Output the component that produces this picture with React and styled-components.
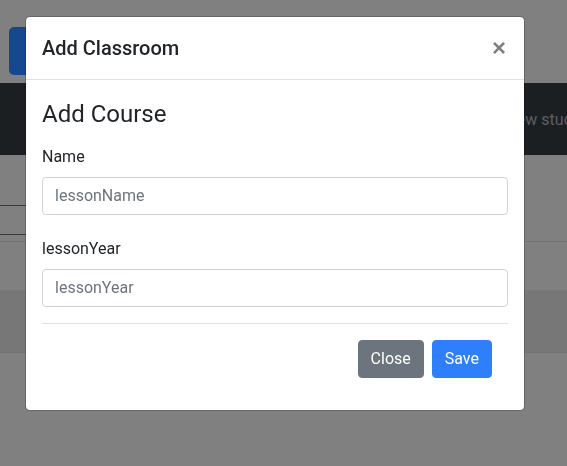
import React from "react";
import styled, { createGlobalStyle } from "styled-components";

const GlobalStyle = createGlobalStyle`
  html, body {
    margin: 0;
    padding: 0;
    height: 100%;
    overflow: hidden;
  }
  body {
    background: #808080;
    font-family: "Segoe UI", Roboto, "Open Sans", sans-serif;
    color: #212529;
  }
  * {
    box-sizing: border-box;
  }
`;

/* ---------- dimmed page behind the modal ---------- */

const Page = styled.div`
  display: flex;
  flex-direction: column;
  height: 466px;
  background: #808080;
`;

const TopBar = styled.div`
  height: 83px;
  padding: 27px 0 8px 9px;
`;

const BrandButton = styled.div`
  width: 120px;
  height: 48px;
  background: #164890;
  border-radius: 5px;
`;

const NavBar = styled.nav`
  height: 72px;
  background: #1c1f22;
  display: flex;
  align-items: center;
  padding-left: 508px;
  overflow: hidden;
`;

const NavLink = styled.span`
  font-size: 16px;
  color: #5a5f64;
  white-space: nowrap;
`;

const SearchRow = styled.div`
  padding-top: 50px;
`;

const SearchBox = styled.div`
  width: 180px;
  height: 30px;
  border-top: 1px solid #3a3a3a;
  border-bottom: 1px solid #3a3a3a;
`;

const TableHead = styled.div`
  height: 7px;
  border-bottom: 1px solid #737373;
`;

const TableRow = styled.div`
  height: ${(p) => p.$h}px;
  background: ${(p) => (p.$shade ? "#777777" : "transparent")};
  border-bottom: 1px solid ${(p) => (p.$shade ? "#727272" : "transparent")};
`;

/* ---------- modal ---------- */

const ModalLayer = styled.div`
  position: fixed;
  inset: 0;
  padding: 16px 0 0 25px;
`;

const Dialog = styled.div`
  width: 500px;
  background: #fff;
  border: 1px solid rgba(0, 0, 0, 0.2);
  border-radius: 5px;
  background-clip: padding-box;
  display: flex;
  flex-direction: column;
`;

const Header = styled.div`
  display: flex;
  align-items: center;
  justify-content: space-between;
  padding: 16px;
  border-bottom: 1px solid #dee2e6;
`;

const Title = styled.h5`
  margin: 0;
  font-size: 20px;
  font-weight: 500;
  line-height: 30px;
`;

const CloseX = styled.button`
  border: 0;
  background: transparent;
  padding: 0 2px 0 0;
  font-size: 24px;
  font-weight: 700;
  line-height: 1;
  color: #000;
  opacity: 0.5;
  text-shadow: 0 1px 0 #fff;
  font-family: "Liberation Sans", "Open Sans", sans-serif;
  cursor: pointer;
`;

const Body = styled.div`
  padding: 20px 16px 32px;
`;

const Heading = styled.h4`
  margin: 0 0 16px;
  font-size: 24px;
  font-weight: 400;
  line-height: 1.2;
`;

const Group = styled.div`
  margin-bottom: ${(p) => p.$mb}px;
`;

const Label = styled.label`
  display: block;
  font-size: 16px;
  line-height: 24px;
  margin-bottom: 8px;
`;

const Input = styled.input`
  display: block;
  width: 100%;
  height: 38px;
  padding: 6px 12px;
  font-size: 16px;
  font-family: inherit;
  color: #495057;
  border: 1px solid #ced4da;
  border-radius: 4px;
  outline: none;
  &::placeholder {
    color: #6c757d;
  }
`;

const Divider = styled.hr`
  margin: 16px 0;
  border: 0;
  border-top: 1px solid #dee2e6;
`;

const Actions = styled.div`
  display: flex;
  justify-content: flex-end;
  gap: 8px;
  padding-right: 16px;
`;

const Button = styled.button`
  height: 38px;
  padding: 6px 12px;
  font-size: 16px;
  font-family: inherit;
  line-height: 24px;
  color: #fff;
  border: 1px solid ${(p) => p.$bg};
  background: ${(p) => p.$bg};
  border-radius: 4px;
  cursor: pointer;
`;

export default function App() {
  return (
    <>
      <GlobalStyle />
      <Page>
        <TopBar>
          <BrandButton />
        </TopBar>
        <NavBar>
          <NavLink>new students</NavLink>
        </NavBar>
        <SearchRow>
          <SearchBox />
        </SearchRow>
        <TableHead />
        <TableRow $h={48} />
        <TableRow $h={63} $shade />
      </Page>

      <ModalLayer>
        <Dialog>
          <Header>
            <Title>Add Classroom</Title>
            <CloseX aria-label="Close">×</CloseX>
          </Header>
          <Body>
            <Heading>Add Course</Heading>
            <Group $mb={22}>
              <Label>Name</Label>
              <Input placeholder="lessonName" />
            </Group>
            <Group $mb={0}>
              <Label>lessonYear</Label>
              <Input placeholder="lessonYear" />
            </Group>
            <Divider />
            <Actions>
              <Button $bg="#6c757d">Close</Button>
              <Button $bg="#2f7ffd">Save</Button>
            </Actions>
          </Body>
        </Dialog>
      </ModalLayer>
    </>
  );
}
